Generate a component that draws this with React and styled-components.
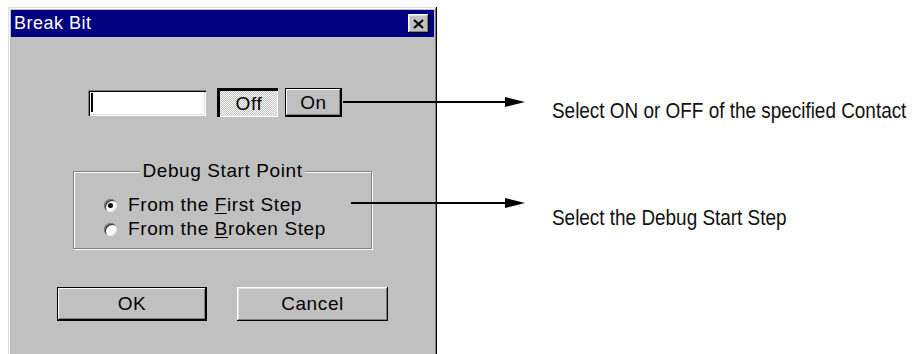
import React from "react";
import styled, { createGlobalStyle } from "styled-components";

const Global = createGlobalStyle`
  html, body { margin: 0; padding: 0; background: #fff; overflow: hidden; }
  body { width: 913px; height: 354px; }
`;

const Page = styled.div`
  position: relative;
  display: flex;
  align-items: flex-start;
  width: 913px;
  height: 354px;
  overflow: hidden;
`;

const Dialog = styled.div`
  width: 429px;
  height: 352px;
  margin: 7px 0 0 8px;
  box-sizing: border-box;
  padding: 3px;
  background: #c0c0c0;
  box-shadow: inset -1px -1px #000, inset 1px 1px #dfdfdf, inset -2px -2px #808080, inset 2px 2px #fff;
  font-family: "Liberation Sans", Arial, sans-serif;
  color: #000;
  flex-shrink: 0;
`;

const TitleBar = styled.div`
  height: 27px;
  background: #000080;
  color: #fff;
  display: flex;
  align-items: center;
  justify-content: space-between;
  padding: 0 5px 0 3px;
  font-size: 18px;
  letter-spacing: 0.5px;
`;

const CloseButton = styled.div`
  width: 21px;
  height: 19px;
  box-sizing: border-box;
  background: #c0c0c0;
  box-shadow: inset -1px -1px #000, inset 1px 1px #fff, inset -2px -2px #808080, inset 2px 2px #dfdfdf;
  display: flex;
  align-items: center;
  justify-content: center;
`;

const Body = styled.div`
  display: flex;
  flex-direction: column;
  align-items: flex-start;
  font-size: 19px;
  letter-spacing: 0.6px;
`;

const TopRow = styled.div`
  display: flex;
  align-items: center;
  margin: 51px 0 0 77px;
`;

const TextBox = styled.div`
  width: 118px;
  height: 26px;
  box-sizing: border-box;
  background: #fff;
  box-shadow: inset 1px 1px #808080, inset 2px 2px #000, inset -1px -1px #fff, inset -2px -2px #dfdfdf;
  display: flex;
  align-items: center;
  padding-left: 3px;
`;

const Caret = styled.span`
  width: 2px;
  height: 19px;
  background: #000;
`;

const ToggleButton = styled.div`
  width: ${(p) => p.$w}px;
  height: 29px;
  margin-left: ${(p) => p.$ml}px;
  box-sizing: border-box;
  display: flex;
  align-items: center;
  justify-content: center;
  ${(p) =>
    p.$pressed
      ? `
    background: repeating-conic-gradient(#fff 0% 25%, #c0c0c0 0% 50%) 0 0 / 2px 2px;
    box-shadow: inset 3px 3px #000, inset -1px -1px #fff, inset -2px -2px #dfdfdf;
    padding: 2px 0 0 3px;
  `
      : `
    background: #c0c0c0;
    box-shadow: inset 0 0 0 1px #000, inset -2px -2px #000, inset 2px 2px #fff, inset -3px -3px #808080;
  `}
`;

const Group = styled.fieldset`
  margin: 43px 0 0 62px;
  width: 299px;
  box-sizing: border-box;
  padding: 0;
  border: 1px solid #808080;
  box-shadow: inset 1px 1px #fff, 1px 1px #fff;
`;

const Legend = styled.legend`
  margin: 0 auto;
  padding: 0 2px;
  line-height: 22px;
  background: #c0c0c0;
`;

const Options = styled.div`
  display: flex;
  flex-direction: column;
  padding: 11px 0 7px 30px;
`;

const RadioRow = styled.label`
  display: flex;
  align-items: center;
  height: 24px;
`;

const RadioDot = styled.span`
  width: 13px;
  height: 13px;
  border-radius: 50%;
  background: #fff;
  box-shadow: inset 1px 1px #808080, inset 2px 2px #404040, inset -1px -1px #dfdfdf;
  display: flex;
  align-items: center;
  justify-content: center;
  margin-right: 11px;
  &::after {
    content: "";
    width: 5px;
    height: 5px;
    border-radius: 50%;
    background: ${(p) => (p.$checked ? "#000" : "transparent")};
  }
`;

const Key = styled.span`
  text-decoration: underline;
  text-underline-offset: 2px;
`;

const ButtonRow = styled.div`
  display: flex;
  gap: 30px;
  margin: 38px 0 0 46px;
`;

const PushButton = styled.div`
  width: ${(p) => p.$w}px;
  height: 34px;
  box-sizing: border-box;
  display: flex;
  align-items: center;
  justify-content: center;
  background: #c0c0c0;
  box-shadow: ${(p) =>
    p.$default
      ? "inset 0 0 0 1px #000, inset -2px -2px #000, inset 2px 2px #fff, inset -3px -3px #808080"
      : "inset -1px -1px #000, inset 1px 1px #fff, inset -2px -2px #808080, inset 2px 2px #dfdfdf"};
`;

const Notes = styled.div`
  display: flex;
  flex-direction: column;
  gap: 81px;
  margin: 98px 0 0 115px;
  font-family: "Liberation Sans", Arial, sans-serif;
  font-size: 22px;
  line-height: 26px;
  color: #111;
  white-space: nowrap;
`;

const Note = styled.span`
  display: block;
  transform: scaleX(0.86);
  transform-origin: left center;
`;

const Arrow = styled.svg`
  position: absolute;
  left: ${(p) => p.$x}px;
  top: ${(p) => p.$y}px;
`;

function Callout({ x, y, len }) {
  return (
    <Arrow $x={x} $y={y - 6} width={len} height={12} viewBox={`0 0 ${len} 12`}>
      <line x1="0" y1="6" x2={len - 18} y2="6" stroke="#000" strokeWidth="2" />
      <polygon points={`${len - 20},1 ${len},6 ${len - 20},11`} fill="#000" />
    </Arrow>
  );
}

export default function App() {
  return (
    <Page>
      <Global />
      <Dialog>
        <TitleBar>
          <span>Break Bit</span>
          <CloseButton>
            <svg width="11" height="10" viewBox="0 0 11 10">
              <path d="M1 1 L10 9 M10 1 L1 9" stroke="#000" strokeWidth="2.2" />
            </svg>
          </CloseButton>
        </TitleBar>
        <Body>
          <TopRow>
            <TextBox>
              <Caret />
            </TextBox>
            <ToggleButton $w={61} $ml={11} $pressed>
              Off
            </ToggleButton>
            <ToggleButton $w={57} $ml={7}>
              On
            </ToggleButton>
          </TopRow>
          <Group>
            <Legend>Debug Start Point</Legend>
            <Options>
              <RadioRow>
                <RadioDot $checked />
                <span>
                  From the <Key>F</Key>irst Step
                </span>
              </RadioRow>
              <RadioRow>
                <RadioDot />
                <span>
                  From the <Key>B</Key>roken Step
                </span>
              </RadioRow>
            </Options>
          </Group>
          <ButtonRow>
            <PushButton $w={150} $default>
              OK
            </PushButton>
            <PushButton $w={151}>Cancel</PushButton>
          </ButtonRow>
        </Body>
      </Dialog>
      <Notes>
        <Note>Select ON or OFF of the specified Contact</Note>
        <Note>Select the Debug Start Step</Note>
      </Notes>
      <Callout x={343} y={102} len={182} />
      <Callout x={351} y={203} len={174} />
    </Page>
  );
}
